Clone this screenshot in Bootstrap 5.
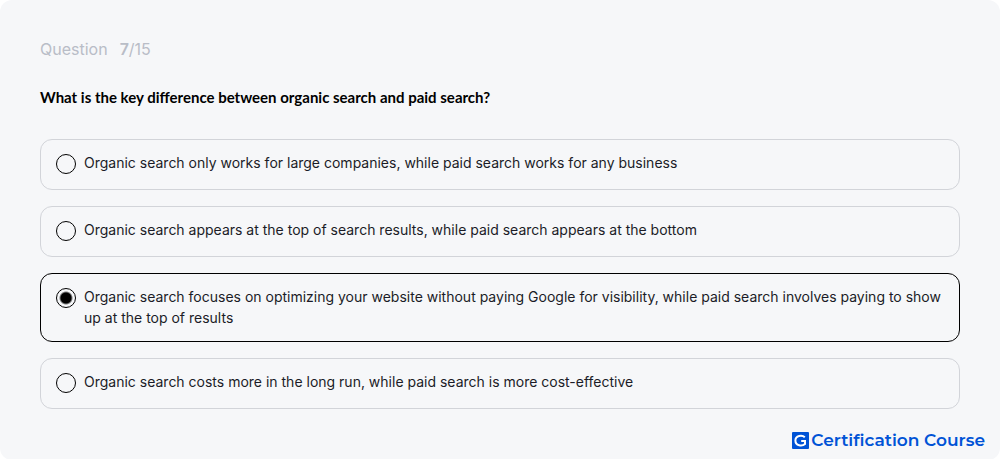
<!DOCTYPE html>
<html lang="en">
<head>
<meta charset="utf-8">
<meta name="viewport" content="width=device-width, initial-scale=1">
<title>Certification Course quiz</title>
<link href="https://cdn.jsdelivr.net/npm/bootstrap@5.3.0/dist/css/bootstrap.min.css" rel="stylesheet">
<style>
  body { font-family: Inter, sans-serif; font-size: 14px; line-height: 21px; color: #1b1c27; background: #fff; }
  .quiz { background: #f6f7f9; border-radius: 12px; padding: 39px 40px 8px; }
  .progress-line { font-size: 16px; line-height: 20px; color: #b9bdc7; gap: 12px; }
  .quiz-title { font-family: Lato, sans-serif; font-size: 15px; line-height: 20px; font-weight: 700; color: #000; margin: 28px 0 32px; }
  .answer { border: 1px solid #d2d4d9; border-radius: 12px; padding: 12px 15px 13px; min-height: 51px; gap: 8px; cursor: pointer; }
  .answer:has(:checked) { border-color: #000; }
  .answer .form-check-input { width: 20px; height: 20px; margin: 2px 0 0; background-color: transparent; border: 1px solid #000; }
  .answer .form-check-input:checked { background: radial-gradient(circle, #000 0 5px, transparent 7px); }
  .brand { font-family: Montserrat, "Open Sans", sans-serif; font-size: 17px; line-height: 24px; font-weight: 600; color: #0053d6; gap: 2px; margin: 19px -25px 0 0; }
</style>
</head>
<body>
<main class="quiz min-vh-100">
  <div class="progress-line d-flex"><span>Question</span><span><span class="fw-semibold">7</span>/15</span></div>
  <form>
    <h1 class="quiz-title" id="q">What is the key difference between organic search and paid search?</h1>
    <div class="d-grid gap-3" role="radiogroup" aria-labelledby="q">
      <label class="answer d-flex align-items-start" for="a1"><input class="form-check-input flex-shrink-0" type="radio" name="answer" id="a1"><span>Organic search only works for large companies, while paid search works for any business</span></label>
      <label class="answer d-flex align-items-start" for="a2"><input class="form-check-input flex-shrink-0" type="radio" name="answer" id="a2"><span>Organic search appears at the top of search results, while paid search appears at the bottom</span></label>
      <label class="answer d-flex align-items-start" for="a3"><input class="form-check-input flex-shrink-0" type="radio" name="answer" id="a3" checked><span>Organic search focuses on optimizing your website without paying Google for visibility, while paid search involves paying to show up at the top of results</span></label>
      <label class="answer d-flex align-items-start" for="a4"><input class="form-check-input flex-shrink-0" type="radio" name="answer" id="a4"><span>Organic search costs more in the long run, while paid search is more cost-effective</span></label>
    </div>
  </form>
  <footer class="brand d-flex justify-content-end align-items-center">
    <svg width="17" height="17" viewBox="0 0 17 17" aria-hidden="true"><rect width="17" height="17" rx="1" fill="#0053d6"/><path d="M12.8 5.2C10.2 2.7 3.4 3.2 3.4 8.6C3.4 14 10.2 14.6 13 12V8.9H9.2" fill="none" stroke="#fff" stroke-width="2"/></svg>
    <span>Certification Course</span>
  </footer>
</main>
<script src="https://cdn.jsdelivr.net/npm/bootstrap@5.3.0/dist/js/bootstrap.bundle.min.js"></script>
</body>
</html>
